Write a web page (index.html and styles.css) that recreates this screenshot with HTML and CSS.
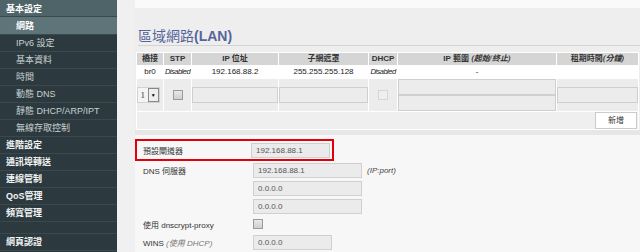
FILE: index.html
```html
<!DOCTYPE html>
<html lang="zh-Hant">
<head>
    <meta charset="UTF-8">
    <title>區域網路(LAN)</title>
    <link rel="stylesheet" href="styles.css">
</head>
<body>
<div class="page">
    <nav class="sidebar">
        <div class="nav-head">基本設定</div>
        <div class="nav-sub active">網路</div>
        <div class="nav-sub">IPv6 設定</div>
        <div class="nav-sub">基本資料</div>
        <div class="nav-sub">時間</div>
        <div class="nav-sub">動態 DNS</div>
        <div class="nav-sub">靜態 DHCP/ARP/IPT</div>
        <div class="nav-sub">無線存取控制</div>
        <div class="nav-top">進階設定</div>
        <div class="nav-top">通訊埠轉送</div>
        <div class="nav-top">連線管制</div>
        <div class="nav-top">QoS管理</div>
        <div class="nav-top">頻寬管理</div>
        <div class="nav-gap"></div>
        <div class="nav-top">網頁認證</div>
    </nav>

    <main class="main">
        <div class="panel-top"></div>

        <section class="lan">
            <h2 class="title">區域網路<b>(LAN)</b></h2>
            <table class="lan-table">
                <colgroup>
                    <col style="width:26px"><col style="width:27px"><col style="width:86px"><col style="width:89px">
                    <col style="width:28px"><col style="width:158px"><col style="width:81px">
                </colgroup>
                <tr class="head">
                    <th>橋接</th><th>STP</th><th>IP 位址</th><th>子網遮罩</th><th>DHCP</th>
                    <th>IP 範圍 <i>(起始/終止)</i></th><th>租期時間<i>(分鐘)</i></th>
                </tr>
                <tr class="data">
                    <td>br0</td><td><i class="state">Disabled</i></td><td>192.168.88.2</td><td>255.255.255.128</td>
                    <td><i class="state">Disabled</i></td><td>-</td><td></td>
                </tr>
                <tr class="edit">
                    <td>
                        <span class="select"><span class="select-val">1</span><span class="select-btn">&#9660;</span></span>
                    </td>
                    <td><span class="check"></span></td>
                    <td><span class="field"></span></td>
                    <td><span class="field"></span></td>
                    <td><span class="check off"></span></td>
                    <td><span class="field"></span><span class="field"></span></td>
                    <td><span class="field"></span></td>
                </tr>
                <tr class="actions">
                    <td colspan="7"><span class="btn">新增</span></td>
                </tr>
            </table>
        </section>

        <section class="gw">
            <div class="row mark">
                <span class="label">預設閘道器</span>
                <span class="input">192.168.88.1</span>
            </div>
            <div class="row">
                <span class="label">DNS 伺服器</span>
                <span class="input wide">192.168.88.1</span>
                <span class="hint">(IP:port)</span>
            </div>
            <div class="row">
                <span class="label"></span>
                <span class="input wide">0.0.0.0</span>
            </div>
            <div class="row">
                <span class="label"></span>
                <span class="input wide">0.0.0.0</span>
            </div>
            <div class="row">
                <span class="label">使用 dnscrypt-proxy</span>
                <span class="check"></span>
            </div>
            <div class="row">
                <span class="label">WINS <i class="note">(使用 DHCP)</i></span>
                <span class="input">0.0.0.0</span>
            </div>
        </section>
    </main>
</div>
</body>
</html>
```

FILE: styles.css
```css
body {
    margin: 0;
    width: 640px;
    height: 252px;
    overflow: hidden;
    background: #f0f0f0;
    font-family: "Liberation Sans", "Noto Sans CJK TC", sans-serif;
    font-size: 8px;
    color: #333;
}
.page {
    display: flex;
    height: 252px;
}

/* sidebar */
.sidebar {
    width: 117px;
    flex: none;
    background: #2c393e;
    font-size: 9px;
}
.nav-head, .nav-sub, .nav-top {
    height: 16px;
    line-height: 17px;
    border-bottom: 1px solid #3b494e;
    white-space: nowrap;
}
.nav-head {
    background: #4e6469;
    color: #fff;
    font-weight: bold;
    padding-left: 6px;
    line-height: 19px;
}
.nav-sub {
    color: #c9d1d3;
    padding-left: 16px;
}
.nav-sub.active {
    background: #5d7479;
    color: #fff;
    font-weight: bold;
    height: 17px;
    line-height: 19px;
}
.nav-top {
    color: #f2f4f4;
    font-weight: bold;
    padding-left: 6px;
}
.nav-gap {
    height: 11px;
    border-bottom: 1px solid #3b494e;
}

/* main */
.main {
    flex: 1;
    padding-left: 18px;
}
.panel-top {
    height: 8px;
    background: #fafafa;
}
.lan {
    background: #eeeeee;
    padding: 20px 0 0 1px;
    height: 102px;
    border-bottom: 5px solid #e7e7e7;
}
.title {
    margin: 0 0 7px 2px;
    font-size: 14px;
    line-height: 17px;
    color: #56659a;
    font-weight: normal;
    border-bottom: 1px solid #d3d3d3;
}
.title b {
    font-weight: bold;
}
.lan-table {
    table-layout: fixed;
    border-collapse: separate;
    border-spacing: 1px;
    background: #fff;
    width: 503px;
    margin-top: -1px;
}
.lan-table th, .lan-table td {
    padding: 0;
    text-align: center;
    overflow: hidden;
    white-space: nowrap;
}
.head th {
    background: #d5d5d5;
    height: 12px;
    line-height: 12px;
    color: #333;
}
.head i {
    font-family: "Liberation Serif", "Noto Sans CJK TC", serif;
    font-weight: bold;
}
.data td {
    height: 12px;
    line-height: 12px;
    background: #fff;
    color: #222;
}
.state {
    font-size: 7.5px;
    letter-spacing: -0.5px;
}
.edit td {
    background: #ececec;
    height: 32px;
}
.actions td {
    background: #efefef;
    height: 17px;
    text-align: right;
}

.select {
    display: flex;
    width: 23px;
    height: 16px;
    border: 1px solid #d2d2d2;
    background: #f4f4f4;
    box-sizing: border-box;
    align-items: center;
}
.select-val {
    font-family: "Liberation Serif", serif;
    font-size: 9px;
    color: #335;
    width: 10px;
    text-align: center;
}
.select-btn {
    width: 10px;
    height: 12px;
    border: 1px solid #888;
    background: #eee;
    font-size: 5px;
    line-height: 12px;
    text-align: center;
    color: #000;
}
.check {
    display: inline-block;
    width: 8px;
    height: 8px;
    border: 1px solid #9a9a9a;
    background: linear-gradient(#e8e8e8, #cfcfcf);
    vertical-align: middle;
}
.check.off {
    border-color: #d6d6d6;
    background: #efefef;
}
.field {
    display: block;
    height: 14px;
    border: 1px solid #cfcfcf;
    background: #ececec;
}
.btn {
    display: inline-block;
    width: 40px;
    height: 15px;
    line-height: 15px;
    margin-right: 1px;
    background: #fff;
    border: 1px solid #cbcbcb;
    text-align: center;
    color: #333;
}

/* gateway / dns */
.gw {
    background: #f7f7f7;
    padding-top: 4px;
    height: 120px;
}
.row {
    display: flex;
    align-items: center;
    height: 18px;
    color: #333;
}
.row.mark {
    width: 195px;
    border: 2px solid #e3000b;
}
.label {
    width: 110px;
    padding-left: 8px;
    flex: none;
    white-space: nowrap;
}
.mark .label {
    width: 108px;
    padding-left: 6px;
}
.note {
    color: #777;
}
.input {
    box-sizing: border-box;
    width: 79px;
    height: 15px;
    line-height: 13px;
    padding-left: 4px;
    border: 1px solid #d0d0d0;
    background: #ebebeb;
    color: #555;
}
.input.wide {
    width: 109px;
}
.hint {
    margin-left: 5px;
    font-style: italic;
    color: #444;
}
```
